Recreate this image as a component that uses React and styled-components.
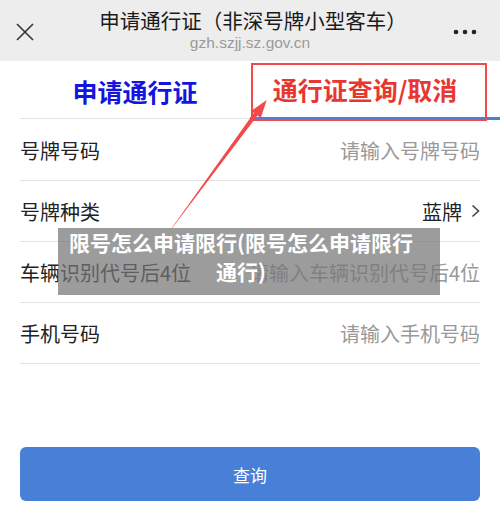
import React from "react";
import styled, { createGlobalStyle } from "styled-components";

const GlobalStyle = createGlobalStyle`
  html, body {
    margin: 0;
    padding: 0;
    background: #fff;
  }
  body {
    font-family: "Noto Sans CJK SC", "Noto Sans", "Liberation Sans", sans-serif;
  }
`;

const fields = [
  { label: "号牌号码", placeholder: "请输入号牌号码" },
  { label: "号牌种类", value: "蓝牌", select: true },
  { label: "车辆识别代号后4位", placeholder: "请输入车辆识别代号后4位" },
  { label: "手机号码", placeholder: "请输入手机号码" },
];

const App = () => {
  return (
    <>
      <GlobalStyle />
      <Page>
        <Header>
          <IconBtn>
            <svg width="18" height="18" viewBox="0 0 18 18">
              <path d="M1 1 L17 17 M17 1 L1 17" stroke="#333" strokeWidth="1.6" fill="none" />
            </svg>
          </IconBtn>
          <TitleBox>
            <Title>申请通行证（非深号牌小型客车）</Title>
            <SubTitle>gzh.szjj.sz.gov.cn</SubTitle>
          </TitleBox>
          <MoreBtn>
            <svg width="24" height="6" viewBox="0 0 24 6">
              <circle cx="3" cy="3" r="2.3" fill="#222" />
              <circle cx="12" cy="3" r="2.3" fill="#222" />
              <circle cx="21" cy="3" r="2.3" fill="#222" />
            </svg>
          </MoreBtn>
        </Header>

        <Tabs>
          <Tab color="#1414e0">申请通行证</Tab>
          <Tab active color="#e8372f">通行证查询/取消</Tab>
        </Tabs>

        <Form>
          {fields.map((f) => (
            <Row key={f.label}>
              <Label>{f.label}</Label>
              {f.select ? (
                <Value>
                  {f.value}
                  <svg width="9" height="14" viewBox="0 0 9 14">
                    <path d="M1.5 1.5 L7.5 7 L1.5 12.5" stroke="#444" strokeWidth="1.6" fill="none" />
                  </svg>
                </Value>
              ) : (
                <Placeholder>{f.placeholder}</Placeholder>
              )}
            </Row>
          ))}
        </Form>

        <SubmitButton>查询</SubmitButton>

        {/* 截图上的标注 */}
        <RedBox />
        <Arrow width="500" height="524" viewBox="0 0 500 524">
          <polygon points="171.6,228.3 172.4,227.7 257.8,115.1 254.2,112.4" fill="#f24a4a" />
          <polygon points="266.7,100 260.8,118.1 251.2,110.9" fill="#f24a4a" />
        </Arrow>
        <Caption>
          限号怎么申请限行(限号怎么申请限行
          <br />
          通行)
        </Caption>
      </Page>
    </>
  );
};

const Page = styled.div`
  position: relative;
  width: 500px;
  height: 524px;
  overflow: hidden;
  background: #fff;
`;

const Header = styled.div`
  display: grid;
  grid-template-columns: 60px 1fr 60px;
  align-items: center;
  height: 61px;
  background: #ededed;
`;

const IconBtn = styled.div`
  display: flex;
  padding-left: 16px;
  padding-top: 2px;
`;

const MoreBtn = styled.div`
  display: flex;
  justify-content: flex-end;
  padding-right: 23px;
  padding-top: 2px;
`;

const TitleBox = styled.div`
  display: flex;
  flex-direction: column;
  align-items: center;
  padding-bottom: 2px;
`;

const Title = styled.div`
  font-size: 20.5px;
  line-height: 26px;
  color: #1a1a1a;
  white-space: nowrap;
  margin-left: 6px;
`;

const SubTitle = styled.div`
  font-family: "Liberation Sans", "Noto Sans", sans-serif;
  font-size: 15.5px;
  line-height: 20px;
  color: #9a9a9a;
`;

const Tabs = styled.div`
  display: flex;
  height: 59px;
  padding-left: 20px;
`;

const Tab = styled.div`
  display: flex;
  align-items: center;
  justify-content: center;
  box-sizing: border-box;
  width: ${({ active }) => (active ? "250px" : "230px")};
  padding-right: ${({ active }) => (active ? "20px" : "0")};
  padding-top: ${({ active }) => (active ? "0" : "2px")};
  font-size: 25px;
  font-weight: 700;
  color: ${({ color }) => color};
  border-bottom: ${({ active }) => (active ? "3px solid #4a80d8" : "1px solid #e2e2e2")};
  margin-bottom: ${({ active }) => (active ? "0" : "1px")};
`;

const Form = styled.div`
  padding: 0 20px;
`;

const Row = styled.div`
  display: flex;
  align-items: center;
  justify-content: space-between;
  height: 60px;
  border-bottom: 1px solid #e2e2e2;
`;

const Label = styled.div`
  font-size: 20px;
  color: #222;
`;

const Placeholder = styled.div`
  font-size: 20px;
  color: #999;
`;

const Value = styled.div`
  display: flex;
  align-items: center;
  gap: 9px;
  font-size: 20px;
  color: #222;
`;

const SubmitButton = styled.button`
  display: block;
  box-sizing: border-box;
  width: 460px;
  height: 54px;
  margin: 83px 20px 0;
  border: none;
  border-radius: 6px;
  background: #4880d8;
  color: #fff;
  font-family: "Noto Sans CJK SC", sans-serif;
  font-size: 17px;
`;

const RedBox = styled.div`
  position: absolute;
  left: 251px;
  top: 63px;
  width: 236px;
  height: 58px;
  box-sizing: border-box;
  border: 2px solid #f04a4a;
`;

const Arrow = styled.svg`
  position: absolute;
  left: 0;
  top: 0;
  pointer-events: none;
`;

const Caption = styled.div`
  position: absolute;
  left: 58px;
  top: 228px;
  box-sizing: border-box;
  width: 382px;
  height: 67px;
  padding-right: 16px;
  background: rgba(118, 118, 118, 0.72);
  color: #fff;
  font-size: 21px;
  font-weight: 700;
  line-height: 29px;
  text-align: center;
`;

export default App;
